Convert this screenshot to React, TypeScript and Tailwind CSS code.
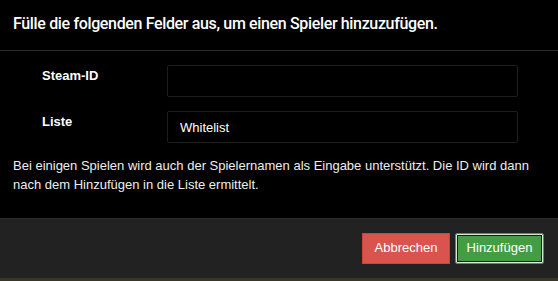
export default function App() {
  return (
    <div className="w-[558px] h-[281px] bg-[#3a3626] overflow-hidden font-['Liberation_Sans',Arial,sans-serif] text-[13px] leading-[18.57px] text-[#eeeeee]">
      <div className="bg-black">
        {/* header */}
        <div className="h-[51px] border-b border-[#2a2a2a] px-[13px] pt-[12px]">
          <h4 className="font-['Roboto',sans-serif] text-[16px] leading-[24px] font-medium text-white tracking-[-0.35px]">
            Fülle die folgenden Felder aus, um einen Spieler hinzuzufügen.
          </h4>
        </div>

        {/* body */}
        <div className="pt-[14px] px-[13px] h-[167px]">
          <div className="flex flex-col gap-[14px]">
            <div className="flex">
              <label className="w-[154px] pl-[29px] pt-[2px] font-bold text-white">Steam-ID</label>
              <input
                className="w-[351px] h-[32px] bg-black border border-[#1e1e1e] rounded-[2px] px-[12px] text-[13px] text-white outline-none"
                defaultValue=""
              />
            </div>
            <div className="flex">
              <label className="w-[154px] pl-[29px] pt-[2px] font-bold text-white">Liste</label>
              <input
                className="w-[351px] h-[32px] bg-black border border-[#1e1e1e] rounded-[2px] px-[12px] text-[13px] text-white outline-none"
                defaultValue="Whitelist"
              />
            </div>
          </div>
          <p className="mt-[14px]">
            Bei einigen Spielen wird auch der Spielernamen als Eingabe unterstützt. Die ID wird dann nach dem Hinzufügen in die Liste ermittelt.
          </p>
        </div>
      </div>

      {/* footer */}
      <div className="h-[60px] bg-[#222222] border-t border-[#2e2e2e] flex justify-end items-start gap-[5px] pt-[14px] pr-[14px]">
        <button className="h-[31px] w-[88px] bg-[#d9534f] border border-[#d43f3a] text-white text-[13px]">
          Abbrechen
        </button>
        <button className="h-[31px] w-[89px] bg-[#449d44] border border-[#449d44] rounded-[2px] text-white text-[13px] shadow-[inset_0_0_0_1px_#d8e8d8,inset_0_0_0_2px_#1a1a1a]">
          Hinzufügen
        </button>
      </div>
    </div>
  );
}
